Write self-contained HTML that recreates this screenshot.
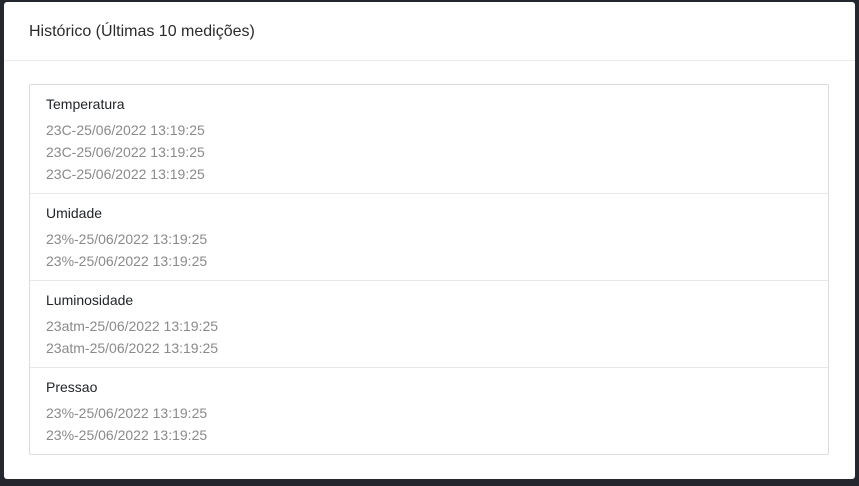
<!DOCTYPE html>
<html><head><style>
body{margin:0;background:#24272d;width:859px;height:486px;overflow:hidden;font-family:"Liberation Sans",sans-serif;}
.card{position:absolute;left:4px;top:2px;width:851px;height:477px;background:#fff;border-radius:3px;}
.hd{height:59px;border-bottom:1px solid #ebebeb;box-sizing:border-box;padding:21px 0 0 25px;font-size:16px;color:#2b2b2b;}
.list{position:absolute;left:25px;top:82px;width:798px;border:1px solid #dcdcdc;border-radius:2px;}
.sec{border-top:1px solid #e8e8e8;padding:10px 16px 0;box-sizing:border-box;}
.sec:first-child{border-top:none}
.t{font-size:14px;color:#212529;height:24px;line-height:18px}
.i{font-size:14px;color:#8a8a8a;line-height:22px}
</style></head><body>
<div class="card">
<div class="hd">Histórico (Últimas 10 medições)</div>
<div class="list">
<div class="sec" style="height:108px"><div class="t">Temperatura</div><div class="i">23C-25/06/2022 13:19:25</div><div class="i">23C-25/06/2022 13:19:25</div><div class="i">23C-25/06/2022 13:19:25</div></div>
<div class="sec" style="height:87px"><div class="t">Umidade</div><div class="i">23%-25/06/2022 13:19:25</div><div class="i">23%-25/06/2022 13:19:25</div></div>
<div class="sec" style="height:87px"><div class="t">Luminosidade</div><div class="i">23atm-25/06/2022 13:19:25</div><div class="i">23atm-25/06/2022 13:19:25</div></div>
<div class="sec" style="height:87px"><div class="t">Pressao</div><div class="i">23%-25/06/2022 13:19:25</div><div class="i">23%-25/06/2022 13:19:25</div></div>
</div>
</div>
</body></html>
